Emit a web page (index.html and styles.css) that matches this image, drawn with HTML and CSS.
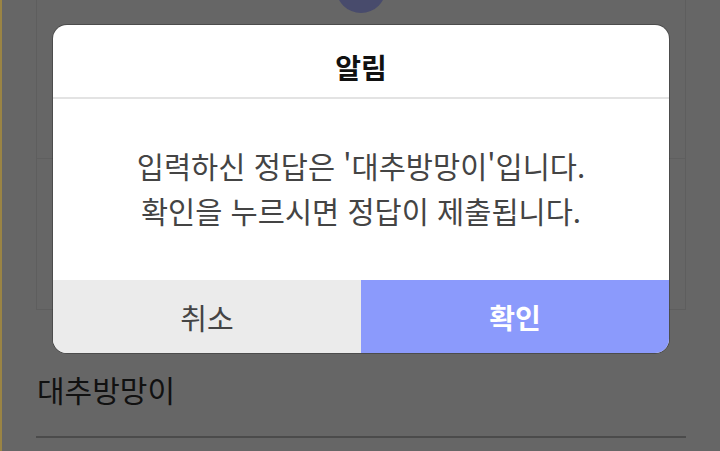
FILE: index.html
```html
<!DOCTYPE html>
<html lang="ko">

<head>
    <meta charset="UTF-8">
    <meta name="viewport" content="width=device-width, initial-scale=1.0">
    <title>알림</title>
    <link rel="stylesheet" href="styles.css">
</head>

<body>
    <div class="page">
        <!-- 뒤쪽 문제 카드 -->
        <div class="card">
            <div class="avatar"></div>
            <div class="card-top"></div>
            <div class="card-bottom"></div>
        </div>

        <div class="answer">대추방망이</div>
        <div class="rule"></div>
    </div>

    <!-- 확인 팝업 -->
    <div class="modal">
        <div class="modal-head">알림</div>
        <div class="modal-body">
            <p>입력하신 정답은 '대추방망이'입니다.</p>
            <p>확인을 누르시면 정답이 제출됩니다.</p>
        </div>
        <div class="modal-foot">
            <button class="btn btn-cancel">취소</button>
            <button class="btn btn-ok">확인</button>
        </div>
    </div>
</body>

</html>
```

FILE: styles.css
```css
html,
body {
    margin: 0;
    padding: 0;
    height: 100%;
}

body {
    background-color: #666;
    border-left: 2px solid #9a8444;
    box-sizing: border-box;
    font-family: "Noto Sans CJK KR", "Noto Sans", sans-serif;
    overflow: hidden;
    position: relative;
}

.page {
    width: 650px;
    margin-left: 34px;
}

.card {
    height: 310px;
    border: 1px solid #5e5e5e;
    border-top: 0;
    box-sizing: border-box;
    display: flex;
    flex-direction: column;
    align-items: center;
}

.avatar {
    width: 50px;
    height: 50px;
    border-radius: 50%;
    background-color: #484b6c;
    margin-top: -37px;
}

.card-top {
    height: 145px;
    align-self: stretch;
    border-bottom: 1px solid #5f5f5f;
}

.card-bottom {
    flex: 1;
}

.answer {
    font-size: 30px;
    color: #111;
    line-height: 40px;
    margin-top: 59px;
    padding-left: 1px;
}

.rule {
    margin-top: 27px;
    border-top: 2px solid #4b4b4b;
}

/* 팝업 */
.modal {
    position: absolute;
    left: 51px;
    top: 25px;
    width: 616px;
    height: 328px;
    background-color: #fff;
    border-radius: 14px;
    overflow: hidden;
    box-shadow: 0 0 0 1px rgba(0, 0, 0, .25);
    display: flex;
    flex-direction: column;
}

.modal-head {
    height: 72px;
    line-height: 84px;
    text-align: center;
    font-size: 28px;
    font-weight: bold;
    color: #111;
    border-bottom: 2px solid #e3e3e3;
}

.modal-body {
    flex: 1;
    display: flex;
    flex-direction: column;
    justify-content: center;
    align-items: center;
    padding-bottom: 3px;
}

.modal-body p {
    margin: 0;
    font-size: 29.5px;
    line-height: 45px;
    color: #444;
}

.modal-foot {
    height: 73px;
    display: flex;
}

.btn {
    flex: 1;
    border: 0;
    font-family: inherit;
    font-size: 29px;
    padding: 0;
}

.btn-cancel {
    background-color: #ebebeb;
    color: #444;
}

.btn-ok {
    background-color: #8b9afc;
    color: #fff;
    font-weight: bold;
    font-size: 28px;
}
```
